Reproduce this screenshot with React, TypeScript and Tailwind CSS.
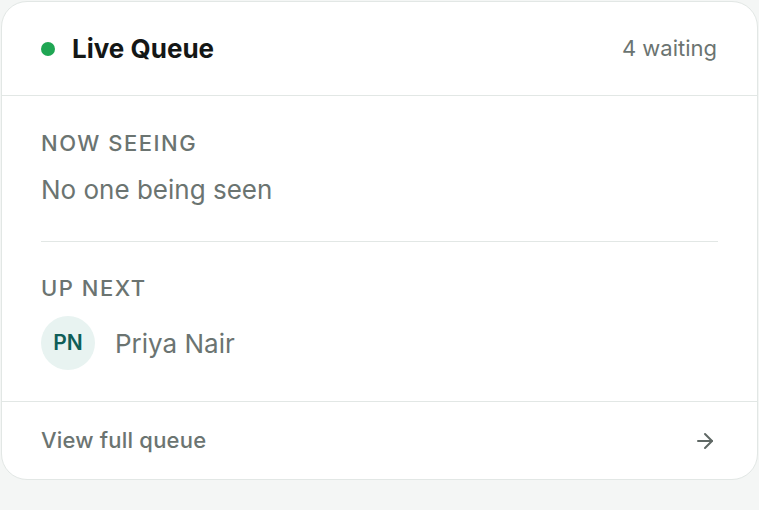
import { ArrowRight } from 'lucide-react';

export default function App() {
  return (
    <div
      className="min-h-screen bg-[#f4f6f5] p-px"
      style={{ fontFamily: 'Inter, "Noto Sans", sans-serif' }}
    >
      <div className="w-[757px] rounded-[26px] border border-[#e2e7e5] bg-white">
        <div className="flex h-[94px] items-center justify-between border-b border-[#e2e7e5] pl-[39px] pr-[40px]">
          <div className="flex items-center gap-[17px]">
            <span className="h-[14px] w-[14px] rounded-full bg-[#1fa653]" />
            <h2 className="text-[26px] font-bold tracking-[0px] text-[#141716]">Live Queue</h2>
          </div>
          <span className="text-[22px] text-[#6b7471]">4 waiting</span>
        </div>

        <div className="px-[39px] pt-[33px] pb-[31px]">
          <div className="text-[22px] font-medium uppercase leading-[28px] tracking-[1.5px] text-[#6b7471]">
            Now seeing
          </div>
          <div className="mt-[17px] text-[26px] leading-[32px] text-[#6b7471]">No one being seen</div>

          <div className="mt-[35px] border-t border-[#e2e7e5]" />

          <div className="mt-[32px] text-[22px] font-medium uppercase leading-[28px] tracking-[1.5px] text-[#6b7471]">
            Up next
          </div>
          <div className="mt-[14px] flex items-center gap-[20px]">
            <div className="flex h-[54px] w-[54px] items-center justify-center rounded-full bg-[#e8f3f1] text-[21px] font-semibold text-[#0f5e58]">
              PN
            </div>
            <span className="text-[26px] text-[#6b7471]">Priya Nair</span>
          </div>
        </div>

        <div className="flex h-[78px] items-center justify-between border-t border-[#e2e7e5] pl-[39px] pr-[40px]">
          <span className="text-[22px] font-medium tracking-[0.2px] text-[#6b7471]">View full queue</span>
          <ArrowRight className="h-[24px] w-[24px] text-[#5f6865]" strokeWidth={2} />
        </div>
      </div>
    </div>
  );
}
